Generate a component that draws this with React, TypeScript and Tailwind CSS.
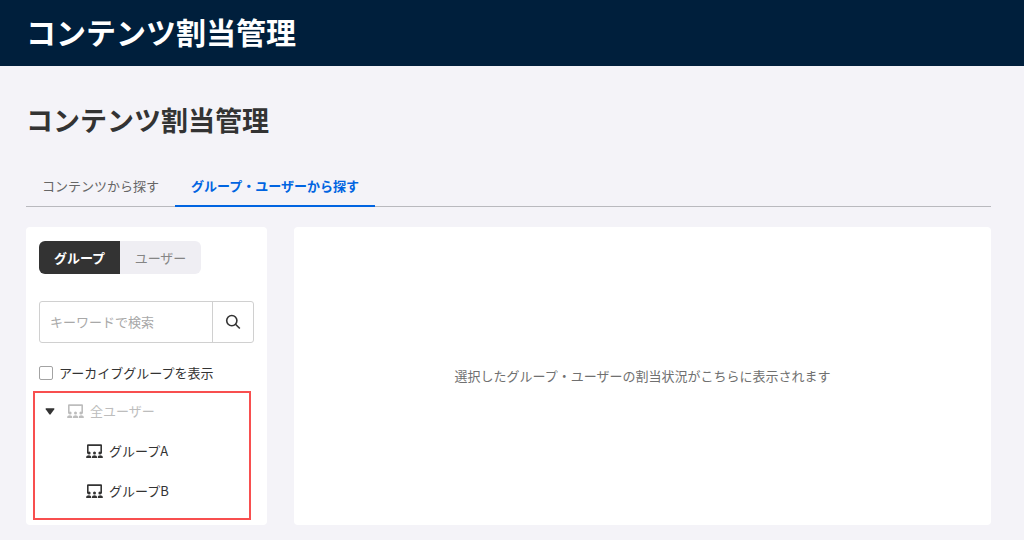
import { useState } from 'react';
import { clsx } from 'clsx';

const TABS = [
  { id: 'contents', label: 'コンテンツから探す' },
  { id: 'groups', label: 'グループ・ユーザーから探す' },
];

const MODES = [
  { id: 'group', label: 'グループ' },
  { id: 'user', label: 'ユーザー' },
];

const CHILD_GROUPS = ['グループA', 'グループB'];

function GroupIcon() {
  return (
    <svg viewBox="0 0 17 14" className="h-[14px] w-[17px] shrink-0" fill="currentColor" aria-hidden="true">
      <path d="M2 .3h13a1 1 0 0 1 1 1V9.500h-1.600V2h-11.800v7.500H1V1.300a1 1 0 0 1 1-1Z" />
      <circle cx="3.100" cy="9.100" r="1.500" />
      <circle cx="8.500" cy="9.100" r="1.500" />
      <circle cx="13.900" cy="9.100" r="1.500" />
      <path d="M.2 14v-.8c0-1.200 1.200-1.900 2.600-1.900s2.400.7 2.400 1.900v.8ZM6 14v-.8c0-1.200 1.100-1.900 2.500-1.900s2.500.7 2.500 1.900v.8ZM11.800 14v-.8c0-1.200 1-1.900 2.400-1.900s2.600.7 2.600 1.900v.8Z" />
    </svg>
  );
}

function SearchIcon() {
  return (
    <svg viewBox="0 0 16 16" className="h-4 w-4" fill="none" stroke="currentColor" strokeWidth="1.600" aria-hidden="true">
      <circle cx="6.800" cy="6.600" r="5.100" />
      <path d="m10.500 10.300 4.300 4.200" />
    </svg>
  );
}

function GroupTree() {
  const [open, setOpen] = useState(true);

  return (
    <div className="-ml-[6px] mr-[3px] mt-2 pb-[9px] ring-2 ring-inset ring-[#f84f4f]">
      <div className="flex h-10 items-center pl-3">
        <button
          type="button"
          aria-label="全ユーザー"
          aria-expanded={open}
          onClick={() => setOpen(!open)}
          className="flex h-4 w-[10px] items-center justify-center text-[#333]"
        >
          <svg viewBox="0 0 10 7" className={clsx('h-[7px] w-[10px]', !open && '-rotate-90')} fill="currentColor">
            <path d="M1.300.2h7.400c.6 0 .9.6.6 1.100L5.700 6.300c-.4.500-1 .5-1.400 0L.7 1.300C.4.800.7.200 1.300.2Z" />
          </svg>
        </button>
        <span className="ml-3 flex items-center gap-[6px] text-[#bdbdbd]">
          <GroupIcon />
          全ユーザー
        </span>
      </div>
      {open && (
        <ul>
          {CHILD_GROUPS.map((name) => (
            <li key={name} className="h-10 pl-[53px]">
              <button type="button" className="flex h-full items-center gap-[6px]">
                <GroupIcon />
                {name}
              </button>
            </li>
          ))}
        </ul>
      )}
    </div>
  );
}

export default function App() {
  const [tab, setTab] = useState('groups');
  const [mode, setMode] = useState('group');

  return (
    <div className="flex min-h-screen flex-col bg-[#f4f3f8] font-['Noto_Sans_CJK_JP',sans-serif] text-[13px] leading-5 text-[#333]">
      <header className="bg-[#001f3c] px-[26px] pb-[15px] pt-[11px]">
        <p className="text-[30px] font-bold leading-10 text-white">コンテンツ割当管理</p>
      </header>

      <main className="flex flex-1 flex-col pb-[15px] pl-[26px] pr-[33px] pt-[34px]">
        <h1 className="text-[27px] font-bold leading-10">コンテンツ割当管理</h1>

        {/* 探し方の切り替え */}
        <div role="tablist" className="mt-[27px] flex border-b border-[#b9b9be]">
          {TABS.map((item) => (
            <button
              key={item.id}
              type="button"
              role="tab"
              aria-selected={tab === item.id}
              onClick={() => setTab(item.id)}
              className={clsx(
                '-mb-px h-10 border-b-2 px-4',
                tab === item.id
                  ? 'border-[#0064e1] font-bold text-[#0064e1]'
                  : 'border-transparent text-[#666]',
              )}
            >
              {item.label}
            </button>
          ))}
        </div>

        <div className="mt-5 flex flex-1 gap-[27px]">
          <aside className="w-[241px] shrink-0 rounded bg-white px-[13px] pb-[5px] pt-[14px]">
            <div className="flex">
              {MODES.map((item) => (
                <button
                  key={item.id}
                  type="button"
                  aria-pressed={mode === item.id}
                  onClick={() => setMode(item.id)}
                  className={clsx(
                    'h-[33px] w-[81px] first:rounded-l-md last:rounded-r-md',
                    mode === item.id ? 'bg-[#333] font-bold text-white' : 'bg-[#efeef3] text-[#858585]',
                  )}
                >
                  {item.label}
                </button>
              ))}
            </div>

            <form
              className="mt-[27px] flex h-[42px] rounded-[3px] border border-[#d0d0d0]"
              onSubmit={(e) => e.preventDefault()}
            >
              <input
                type="text"
                aria-label="キーワードで検索"
                placeholder="キーワードで検索"
                className="min-w-0 flex-1 px-[10px] outline-none placeholder:text-[#a8a8a8]"
              />
              <button
                type="submit"
                aria-label="検索"
                className="flex w-[41px] items-center justify-center border-l border-[#d0d0d0]"
              >
                <SearchIcon />
              </button>
            </form>

            <label className="mt-5 flex items-center gap-[6px]">
              <input
                type="checkbox"
                className="h-[14px] w-[14px] appearance-none rounded-[2px] border border-[#a3a3a3] bg-white checked:bg-[#0064e1]"
              />
              アーカイブグループを表示
            </label>

            <GroupTree />
          </aside>

          <section className="flex min-w-0 flex-1 items-center justify-center rounded bg-white p-4">
            <p className="text-[#707070]">選択したグループ・ユーザーの割当状況がこちらに表示されます</p>
          </section>
        </div>
      </main>
    </div>
  );
}
